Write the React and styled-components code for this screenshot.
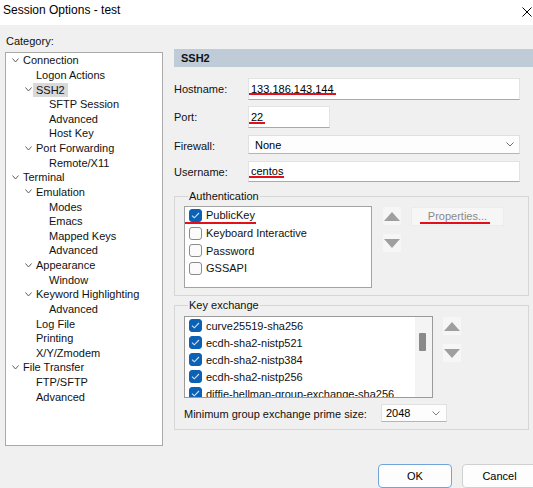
import React from 'react';
import styled, { createGlobalStyle } from 'styled-components';

const GlobalStyle = createGlobalStyle`
  html, body { margin: 0; padding: 0; background: #f0f0f0; }
  body {
    font-family: "Liberation Sans", Arial, sans-serif;
    font-size: 11px;
    color: #111;
  }
  * { box-sizing: border-box; }
`;

const Window = styled.div`
  width: 533px;
  height: 488px;
  overflow: hidden;
  background: #f0f0f0;
  display: flex;
  flex-direction: column;
`;

const TitleBar = styled.div`
  height: 25px;
  flex: none;
  background: #fff;
  display: flex;
  align-items: center;
  justify-content: space-between;
  padding: 0 1px 5px 3px;
`;

const TitleText = styled.span`
  font-size: 12px;
  color: #000;
`;

const CloseIcon = styled.svg`
  width: 10px;
  height: 10px;
  margin-top: 3px;
`;

const Body = styled.div`
  flex: 1;
  display: flex;
  padding-left: 5px;
  min-height: 0;
`;

const LeftPane = styled.div`
  width: 158px;
  flex: none;
  display: flex;
  flex-direction: column;
`;

const CategoryLabel = styled.div`
  margin-top: 9px;
  padding-left: 1px;
  line-height: 14px;
`;

const TreeBox = styled.div`
  margin-top: 4px;
  height: 394px;
  background: #fff;
  border: 1px solid #a9a9a9;
  overflow: hidden;
`;

const TreeRow = styled.div`
  height: 14.64px;
  display: flex;
  align-items: center;
  padding-left: ${p => 6 + p.$level * 13}px;
  white-space: nowrap;
`;

const ChevronSlot = styled.span`
  width: 11px;
  flex: none;
  display: flex;
  align-items: center;
`;

const TreeLabel = styled.span`
  line-height: 14px;
  padding: 0 3px;
  margin-left: -3px;
  background: ${p => (p.$selected ? '#d9d9d9' : 'transparent')};
`;

const RightPane = styled.div`
  margin-left: 11px;
  flex: 1;
  display: flex;
  flex-direction: column;
  min-width: 0;
`;

const Header = styled.div`
  margin-top: 24px;
  height: 19px;
  background: #bfccd8;
  padding-left: 7px;
  display: flex;
  align-items: center;
  font-weight: bold;
`;

const Form = styled.div`
  margin-top: 11px;
  display: flex;
  flex-direction: column;
`;

const FieldRow = styled.div`
  display: flex;
  align-items: center;
  height: ${p => p.$h}px;
  margin-top: ${p => p.$mt || 0}px;
`;

const FieldLabel = styled.span`
  width: 74px;
  flex: none;
  padding-top: ${p => p.$dy || 0}px;
`;

const TextBox = styled.div`
  width: ${p => p.$w}px;
  height: 100%;
  background: #fff;
  border: 1px solid #e3e3e3;
  border-bottom-color: #a9a9a9;
  padding-left: 2px;
  display: flex;
  align-items: center;
  color: #000;
`;

const Combo = styled.div`
  width: ${p => p.$w}px;
  height: 100%;
  background: #fdfdfd;
  border: 1px solid #e0e0e0;
  border-bottom-color: #b5b5b5;
  padding: 0 ${p => p.$pr || 5}px 0 ${p => p.$pl || 5}px;
  display: flex;
  align-items: center;
  justify-content: space-between;
  color: #000;
`;

const Annot = styled.span`
  position: relative;
  line-height: 13px;
  &::after {
    content: '';
    position: absolute;
    left: ${p => p.$l}px;
    right: ${p => p.$r}px;
    bottom: ${p => p.$b}px;
    height: 2px;
    background: #e3101c;
  }
`;

const Group = styled.fieldset`
  margin: ${p => p.$mt}px 4px 0 0;
  padding: ${p => p.$pt}px 9px ${p => p.$pb}px 9px;
  border: 1px solid #d6d6d6;
  min-width: 0;
`;

const Legend = styled.legend`
  padding: 0 1px;
  margin-left: 4px;
  line-height: 14px;
`;

const GroupRow = styled.div`
  display: flex;
  align-items: flex-start;
`;

const ListBox = styled.div`
  width: ${p => p.$w}px;
  height: 82px;
  background: #fff;
  border: 1px solid ${p => p.$border || '#a3a3a3'};
  display: flex;
  overflow: hidden;
`;

const ListItems = styled.div`
  flex: 1;
  overflow: hidden;
  padding-left: 4px;
`;

const ListItem = styled.div`
  height: ${p => p.$h}px;
  display: flex;
  align-items: center;
  white-space: nowrap;
  gap: 4px;
`;

const Box = styled.span`
  width: 13px;
  height: 13px;
  flex: none;
  border-radius: 3px;
  background: ${p => (p.$checked ? '#0b62b5' : '#fbfbfb')};
  border: 1px solid ${p => (p.$checked ? '#0b62b5' : '#8b8b8b')};
  display: flex;
  align-items: center;
  justify-content: center;
`;

const ScrollTrack = styled.div`
  width: 17px;
  flex: none;
  background: #f4f4f4;
  padding: 16px 0 0 4px;
`;

const ScrollThumb = styled.div`
  width: 7px;
  height: 18px;
  background: #8a8a8a;
  border-radius: 1px;
`;

const ArrowCol = styled.div`
  margin: 1px 0 0 ${p => p.$ml}px;
  display: flex;
  flex-direction: column;
  gap: 9px;
`;

const ArrowButton = styled.div`
  width: 18px;
  height: 18px;
  background: #f6f6f6;
  display: flex;
  align-items: center;
  justify-content: center;
`;

const PropButton = styled.div`
  margin: 1px 0 0 10px;
  width: 93px;
  height: 19px;
  background: #f6f6f6;
  border: 1px solid #ececec;
  color: #8a8a8a;
  display: flex;
  align-items: center;
  justify-content: center;
`;

const MinRow = styled.div`
  margin-top: 6px;
  height: 18px;
  display: flex;
  align-items: center;
`;

const MinLabel = styled.span`
  width: 197px;
  flex: none;
  padding-top: 2px;
`;

const ButtonRow = styled.div`
  margin-top: 34px;
  padding-left: 204px;
  display: flex;
  gap: 10px;
`;

const DialogButton = styled.div`
  width: ${p => p.$w}px;
  height: 24px;
  flex: none;
  border-radius: 4px;
  background: #fdfdfd;
  border: 1px solid ${p => (p.$primary ? '#72a6da' : '#d0d0d0')};
  display: flex;
  align-items: center;
  justify-content: center;
  color: #000;
`;

const Chevron = ({ w = 6, h = 4, color = '#606060' }) => (
  <svg width={w + 1} height={h + 1} viewBox={`0 0 ${w + 1} ${h + 1}`}>
    <polyline
      points={`0.5,0.5 ${(w + 1) / 2},${h} ${w + 0.5},0.5`}
      fill="none"
      stroke={color}
      strokeWidth="1"
    />
  </svg>
);

const Triangle = ({ up }) => (
  <svg width="16" height="9" viewBox="0 0 16 9">
    <polygon points={up ? '8,0 16,9 0,9' : '0,0 16,0 8,9'} fill="#9f9f9f" />
  </svg>
);

const CheckBox = ({ checked }) => (
  <Box $checked={checked}>
    {checked && (
      <svg width="9" height="7" viewBox="0 0 9 7">
        <polyline points="1,3.6 3.3,5.8 8,1" fill="none" stroke="#cfe3f7" strokeWidth="1.1" />
      </svg>
    )}
  </Box>
);

const tree = [
  ['Connection', 0, true],
  ['Logon Actions', 1],
  ['SSH2', 1, true, true],
  ['SFTP Session', 2],
  ['Advanced', 2],
  ['Host Key', 2],
  ['Port Forwarding', 1, true],
  ['Remote/X11', 2],
  ['Terminal', 0, true],
  ['Emulation', 1, true],
  ['Modes', 2],
  ['Emacs', 2],
  ['Mapped Keys', 2],
  ['Advanced', 2],
  ['Appearance', 1, true],
  ['Window', 2],
  ['Keyword Highlighting', 1, true],
  ['Advanced', 2],
  ['Log File', 1],
  ['Printing', 1],
  ['X/Y/Zmodem', 1],
  ['File Transfer', 0, true],
  ['FTP/SFTP', 1],
  ['Advanced', 1],
];

const kex = [
  'curve25519-sha256',
  'ecdh-sha2-nistp521',
  'ecdh-sha2-nistp384',
  'ecdh-sha2-nistp256',
  'diffie-hellman-group-exchange-sha256',
];

export default function App() {
  return (
    <Window>
      <GlobalStyle />
      <TitleBar>
        <TitleText>Session Options - test</TitleText>
        <CloseIcon viewBox="0 0 10 10">
          <path d="M0.5 0.5 L9.5 9.5 M9.5 0.5 L0.5 9.5" stroke="#000" strokeWidth="1" fill="none" />
        </CloseIcon>
      </TitleBar>
      <Body>
        <LeftPane>
          <CategoryLabel>Category:</CategoryLabel>
          <TreeBox>
            {tree.map(([label, level, expanded, selected], i) => (
              <TreeRow key={i} $level={level}>
                <ChevronSlot>{expanded && <Chevron />}</ChevronSlot>
                <TreeLabel $selected={selected}>{label}</TreeLabel>
              </TreeRow>
            ))}
          </TreeBox>
        </LeftPane>
        <RightPane>
          <Header>SSH2</Header>
          <Form>
            <FieldRow $h={22}>
              <FieldLabel>Hostname:</FieldLabel>
              <TextBox $w={272}>
                <Annot $l={-2} $r={-2} $b={1}>133.186.143.144</Annot>
              </TextBox>
            </FieldRow>
            <FieldRow $h={22} $mt={6}>
              <FieldLabel>Port:</FieldLabel>
              <TextBox $w={82}>
                <Annot $l={-2} $r={-2} $b={0}>22</Annot>
              </TextBox>
            </FieldRow>
            <FieldRow $h={19} $mt={7}>
              <FieldLabel $dy={3}>Firewall:</FieldLabel>
              <Combo $w={272} $pl={6} $pr={5}>
                <span>None</span>
                <Chevron w={7} color="#707070" />
              </Combo>
            </FieldRow>
            <FieldRow $h={21} $mt={7}>
              <FieldLabel>Username:</FieldLabel>
              <TextBox $w={272}>
                <Annot $l={-2} $r={-1} $b={0}>centos</Annot>
              </TextBox>
            </FieldRow>
          </Form>

          <Group $mt={7} $pt={3} $pb={7}>
            <Legend>Authentication</Legend>
            <GroupRow>
              <ListBox $w={188}>
                <ListItems>
                  <ListItem $h={17.5}>
                    <CheckBox checked />
                    <Annot $l={-22} $r={-1} $b={-2}>PublicKey</Annot>
                  </ListItem>
                  <ListItem $h={17.5}>
                    <CheckBox />
                    <span>Keyboard Interactive</span>
                  </ListItem>
                  <ListItem $h={17.5}>
                    <CheckBox />
                    <span>Password</span>
                  </ListItem>
                  <ListItem $h={17.5}>
                    <CheckBox />
                    <span>GSSAPI</span>
                  </ListItem>
                </ListItems>
              </ListBox>
              <ArrowCol $ml={11}>
                <ArrowButton><Triangle up /></ArrowButton>
                <ArrowButton><Triangle /></ArrowButton>
              </ArrowCol>
              <PropButton>
                <Annot $l={-8} $r={-3} $b={-1}>Properties...</Annot>
              </PropButton>
            </GroupRow>
          </Group>

          <Group $mt={2} $pt={4} $pb={7}>
            <Legend>Key exchange</Legend>
            <GroupRow>
              <ListBox $w={249} $border="#9a9a9a">
                <ListItems>
                  {kex.map(k => (
                    <ListItem key={k} $h={17}>
                      <CheckBox checked />
                      <span>{k}</span>
                    </ListItem>
                  ))}
                </ListItems>
                <ScrollTrack>
                  <ScrollThumb />
                </ScrollTrack>
              </ListBox>
              <ArrowCol $ml={10}>
                <ArrowButton><Triangle up /></ArrowButton>
                <ArrowButton><Triangle /></ArrowButton>
              </ArrowCol>
            </GroupRow>
            <MinRow>
              <MinLabel>Minimum group exchange prime size:</MinLabel>
              <Combo $w={66} $pl={4} $pr={6}>
                <span>2048</span>
                <Chevron w={7} color="#808080" />
              </Combo>
            </MinRow>
          </Group>

          <ButtonRow>
            <DialogButton $w={74} $primary>OK</DialogButton>
            <DialogButton $w={75}>Cancel</DialogButton>
          </ButtonRow>
        </RightPane>
      </Body>
    </Window>
  );
}
